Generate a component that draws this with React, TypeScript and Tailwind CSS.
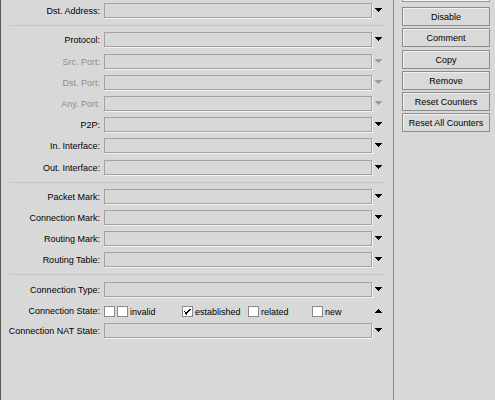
import React from "react";

const BG = "bg-[#d8d8d8]";

function Arrow({ up = false, disabled = false }: { up?: boolean; disabled?: boolean }) {
  const c = disabled ? "#9c9c9c" : "#000000";
  const rows = up ? [1, 3, 5, 7] : [7, 5, 3, 1];
  return (
    <svg width="7" height="4" viewBox="0 0 7 4" shapeRendering="crispEdges" className="block">
      {rows.map((w, i) => (
        <rect key={i} x={(7 - w) / 2} y={i} width={w} height={1} fill={c} />
      ))}
    </svg>
  );
}

function Field({ label, disabled = false, h = 21 }: { label: string; disabled?: boolean; h?: number }) {
  return (
    <div className="flex items-start" style={{ height: h }}>
      <div
        className={`w-[99px] text-right leading-[15px] mt-[4px] whitespace-nowrap ${
          disabled ? "text-[#8e8e8e]" : "text-black"
        }`}
      >
        {label}
      </div>
      <div className="ml-[4px] mt-[3px] w-[268px] h-[15px] border border-[#a2a2a2] shadow-[1px_1px_0_#f2f2f2]" />
      <div className="ml-[3px] mt-[8px]">
        <Arrow disabled={disabled} />
      </div>
    </div>
  );
}

function Sep({ h = 8 }: { h?: number }) {
  return (
    <div className="pt-[4px]" style={{ height: h }}>
      <div className="ml-[9px] w-[376px] h-[1px] bg-[#c6c6c6]" />
    </div>
  );
}

function Box({ checked = false }: { checked?: boolean }) {
  return (
    <div className="w-[11px] h-[11px] border border-[#8a8a8a] bg-white shrink-0 flex items-center justify-center">
      {checked && (
        <svg width="7" height="7" viewBox="0 0 7 7" shapeRendering="crispEdges">
          <path d="M0.5 3.5 L2.5 5.5 L6.5 0.8" stroke="#000" strokeWidth="1.4" fill="none" />
        </svg>
      )}
    </div>
  );
}

function StateItem({ label, w, checked = false }: { label: string; w?: number; checked?: boolean }) {
  return (
    <div className="flex items-center" style={w ? { width: w } : undefined}>
      <Box checked={checked} />
      <span className="ml-[2px] leading-[11px] pt-[2px]">{label}</span>
    </div>
  );
}

function Btn({ children, mt = 0 }: { children: React.ReactNode; mt?: number }) {
  return (
    <div
      className="w-[88px] h-[19px] border border-[#8c8c8c] bg-[#d9d9d9] shadow-[inset_1px_1px_0_#f0f0f0] flex items-center justify-center text-black leading-[15px] pt-[1px]"
      style={{ marginTop: mt }}
    >
      {children}
    </div>
  );
}

export default function App() {
  return (
    <div
      className={`w-[495px] h-[400px] ${BG} flex overflow-hidden text-[9px] text-black`}
      style={{ fontFamily: '"Liberation Sans", Arial, sans-serif' }}
    >
      {/* left panel */}
      <div className="w-[393px] h-full border-l border-[#5a5a5a] flex flex-col">
        <Field label="Dst. Address:" />
        <Sep />
        <Field label="Protocol:" h={22} />
        <Field label="Src. Port:" disabled />
        <Field label="Dst. Port:" disabled />
        <Field label="Any. Port:" disabled />
        <Field label="P2P:" />
        <Field label="In. Interface:" h={22} />
        <Field label="Out. Interface:" />
        <Sep />
        <Field label="Packet Mark:" />
        <Field label="Connection Mark:" />
        <Field label="Routing Mark:" />
        <Field label="Routing Table:" />
        <Sep h={9} />
        <Field label="Connection Type:" />
        <div className="flex items-start h-[20px]">
          <div className="w-[99px] text-right leading-[15px] mt-[4px] whitespace-nowrap">Connection State:</div>
          <div className="ml-[4px] mt-[5px] flex items-center w-[268px]">
            <Box />
            <div className="w-[2px]" />
            <StateItem label="invalid" w={65} />
            <StateItem label="established" w={66} checked />
            <StateItem label="related" w={64} />
            <StateItem label="new" />
          </div>
          <div className="ml-[3px] mt-[9px]">
            <Arrow up />
          </div>
        </div>
        <Field label="Connection NAT State:" />
      </div>
      {/* divider */}
      <div className="w-[1px] h-full bg-[#8a8a8a]" />
      {/* right panel */}
      <div className="flex-1 pl-[8px] flex flex-col">
        <div className="w-[88px] h-[2px] bg-[#f2f2f2] border-b border-x border-[#9a9a9a]" />
        <Btn mt={5}>Disable</Btn>
        <Btn mt={2}>Comment</Btn>
        <Btn mt={3}>Copy</Btn>
        <Btn mt={2}>Remove</Btn>
        <Btn mt={2}>Reset Counters</Btn>
        <Btn mt={2}>Reset All Counters</Btn>
      </div>
    </div>
  );
}
